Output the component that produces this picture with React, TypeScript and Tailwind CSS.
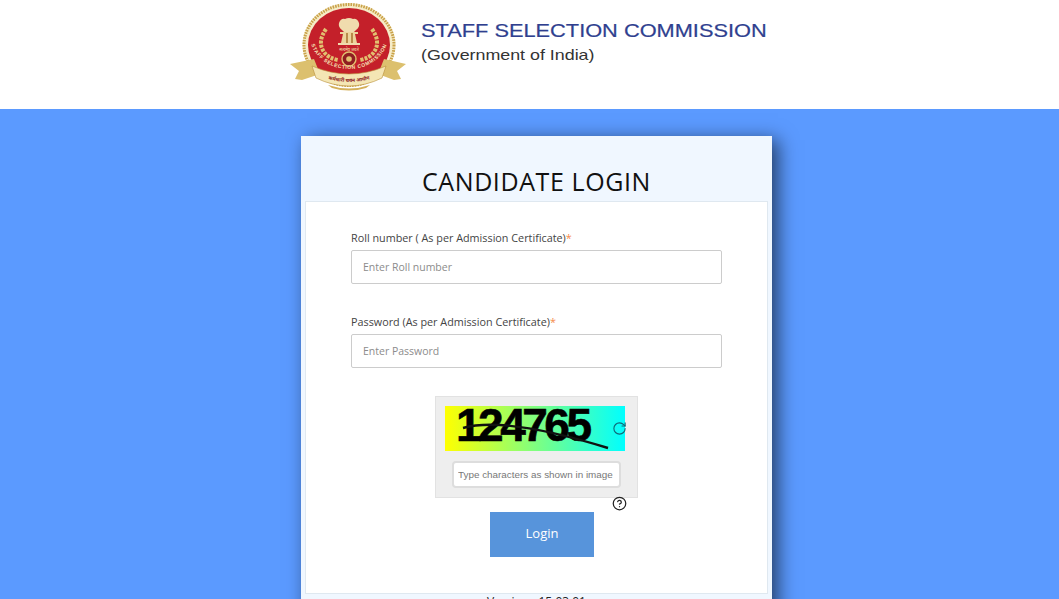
import React from 'react';
import { RotateCw, CircleHelp } from 'lucide-react';

const Logo = () => (
  <svg width="120" height="92" viewBox="0 0 120 92" className="shrink-0">
    <defs>
      <path id="logoArc" d="M 22 34 A 39 33 0 0 0 100 34" fill="none" />
      <path id="ribbonArc" d="M 30 74 Q 61 86 92 74" fill="none" />
    </defs>
    {/* outer gold ring */}
    <ellipse cx="61" cy="43" rx="46.5" ry="42" fill="#f6ecc8" />
    <ellipse cx="61" cy="43" rx="45" ry="40.5" fill="none" stroke="#c9a24a" strokeWidth="3" strokeDasharray="1.6 1" />
    <ellipse cx="61" cy="43" rx="41" ry="37" fill="#c4202a" />
    {/* lion capital */}
    <path d="M51 21 q2 -5 6 -4 q4 -2 8 0 q4 -1 6 4 q1 4 -3 7 l-2 2 h-10 l-2 -2 q-4 -3 -3 -7 z" fill="#f0dcae" />
    <path d="M52 30 h18 v2 h-3 l2 9 h-16 l2 -9 h-3 z" fill="#ecd49c" />
    <path d="M58 31 h2 v10 h-2 z M63 31 h2 v10 h-2 z" fill="#b98a4a" />
    <rect x="50" y="41" width="22" height="2" fill="#f0dcae" />
    <text x="61" y="49" textAnchor="middle" fontSize="4" fill="#f6e6b8" fontFamily="Noto Sans, sans-serif">सत्यमेव जयते</text>
    {/* wreath */}
    <path d="M38 27 q-9 13 -2 23 q4 6 14 8" fill="none" stroke="#e2c070" strokeWidth="4" strokeDasharray="3 1.2" />
    <path d="M84 27 q9 13 2 23 q-4 6 -14 8" fill="none" stroke="#e2c070" strokeWidth="4" strokeDasharray="3 1.2" />
    <circle cx="61" cy="57" r="7" fill="#8f1d22" stroke="#e2c070" strokeWidth="1.4" />
    <circle cx="61" cy="57" r="2.8" fill="#e2c070" />
    <text fontSize="5" fontWeight="700" fill="#f6e6b8" fontFamily="Liberation Sans, sans-serif" letterSpacing="0.6">
      <textPath href="#logoArc" startOffset="50%" textAnchor="middle">STAFF SELECTION COMMISSION</textPath>
    </text>
    {/* ribbon */}
    <path d="M2 62 L26 57 L32 72 L14 78 L7 77 L11 69 Z" fill="#dcc06e" />
    <path d="M118 62 L96 57 L90 72 L106 78 L113 77 L109 69 Z" fill="#dcc06e" />
    <path d="M24 64 Q61 80 98 64 L94 76 Q61 92 28 76 Z" fill="#f4e6b4" stroke="#b98f3a" strokeWidth="0.6" />
    <path d="M40 83 Q61 90 82 83 L78 86 Q61 91 44 86 Z" fill="#d4b05a" />
    <text fontSize="5" fontWeight="700" fill="#8a1a1a" fontFamily="Noto Sans, sans-serif">
      <textPath href="#ribbonArc" startOffset="50%" textAnchor="middle">कर्मचारी चयन आयोग</textPath>
    </text>
  </svg>
);

const Field = ({ label, placeholder }: { label: string; placeholder: string }) => (
  <div>
    <label className="block text-[10.8px] leading-[14px] text-[#444] mb-[5px]">
      {label}<span className="text-[#f58a4b]">*</span>
    </label>
    <input
      placeholder={placeholder}
      className="w-full h-[34px] px-[11px] bg-white border border-[#ccc] rounded-[2px] text-[10.5px] placeholder:text-[#8c8c8c] outline-none"
    />
  </div>
);

export default function App() {
  return (
    <div className="h-[599px] overflow-hidden bg-[#5b9aff] font-['Open_Sans',sans-serif]">
      {/* Top banner */}
      <header className="h-[109px] bg-white flex pl-[288px] pt-[2px]">
        <Logo />
        <div className="ml-[13px] pt-[18px] font-['Liberation_Sans',sans-serif]">
          <div className="text-[18px] leading-[22px] text-[#2f3f8f] whitespace-nowrap origin-left scale-x-[1.21] [-webkit-text-stroke:0.2px_#2f3f8f]">STAFF SELECTION COMMISSION</div>
          <div className="text-[14.5px] leading-[20px] mt-[3px] text-[#333] whitespace-nowrap origin-left scale-x-[1.23]">(Government of India)</div>
        </div>
      </header>

      {/* Login card */}
      <main className="flex justify-center pt-[27px] pl-[14px]">
        <div className="w-[471px] h-[520px] bg-[#f0f7ff] shadow-[6px_4px_18px_rgba(0,0,0,0.6)] px-[4px]">
          <h1 className="h-[65px] pt-[28px] text-center text-[25px] leading-[34px] tracking-[0.6px] font-medium text-[#111]">CANDIDATE LOGIN</h1>
          <div className="h-[393px] bg-white border border-[#dfe8f0] px-[45px] pt-[29px]">
            <div className="w-[371px] flex flex-col gap-[31px]">
              <Field label="Roll number ( As per Admission Certificate)" placeholder="Enter Roll number" />
              <Field label="Password (As per Admission Certificate)" placeholder="Enter Password" />
            </div>

            {/* Captcha */}
            <div className="relative w-[203px] h-[102px] ml-[84px] mt-[28px] bg-[#eeeeee] border border-[#e2e2e2] pt-[9px] pl-[9px]">
              <div className="relative w-[180px] h-[45px] bg-[linear-gradient(to_right,#ffff00,#00ffff)]">
                <span className="absolute left-[11px] top-[1px] text-[46px] leading-[36px] font-bold tracking-[-3.5px] text-black font-['Liberation_Sans',sans-serif] [-webkit-text-stroke:0.6px_#000]">124765</span>
                <svg width="180" height="45" className="absolute left-0 top-0">
                  <path d="M18 22 Q60 10 163 42" fill="none" stroke="#111" strokeWidth="2.4" />
                </svg>
                <RotateCw className="absolute right-[-2px] top-[15px] w-[15px] h-[15px] text-[#0e6a78]" strokeWidth={1.8} />
              </div>
              <input
                placeholder="Type characters as shown in image"
                className="block w-[169px] h-[27px] ml-[7px] mt-[10px] px-[4px] bg-white border-2 border-[#ddd] rounded-[4px] text-[9.9px] placeholder:text-[#777] outline-none font-['Liberation_Sans',sans-serif]"
              />
              <CircleHelp className="absolute right-[10px] bottom-[-14px] w-[15px] h-[15px] text-[#222]" strokeWidth={2} />
            </div>

            <button className="block w-[104px] h-[45px] ml-[139px] mt-[14px] pb-[1px] bg-[#5794db] text-white text-[13px]">Login</button>
          </div>
          <div className="text-center text-[12px] leading-[14px] mt-[1px] text-[#222]">Version : 15.03.01</div>
        </div>
      </main>
    </div>
  );
}
